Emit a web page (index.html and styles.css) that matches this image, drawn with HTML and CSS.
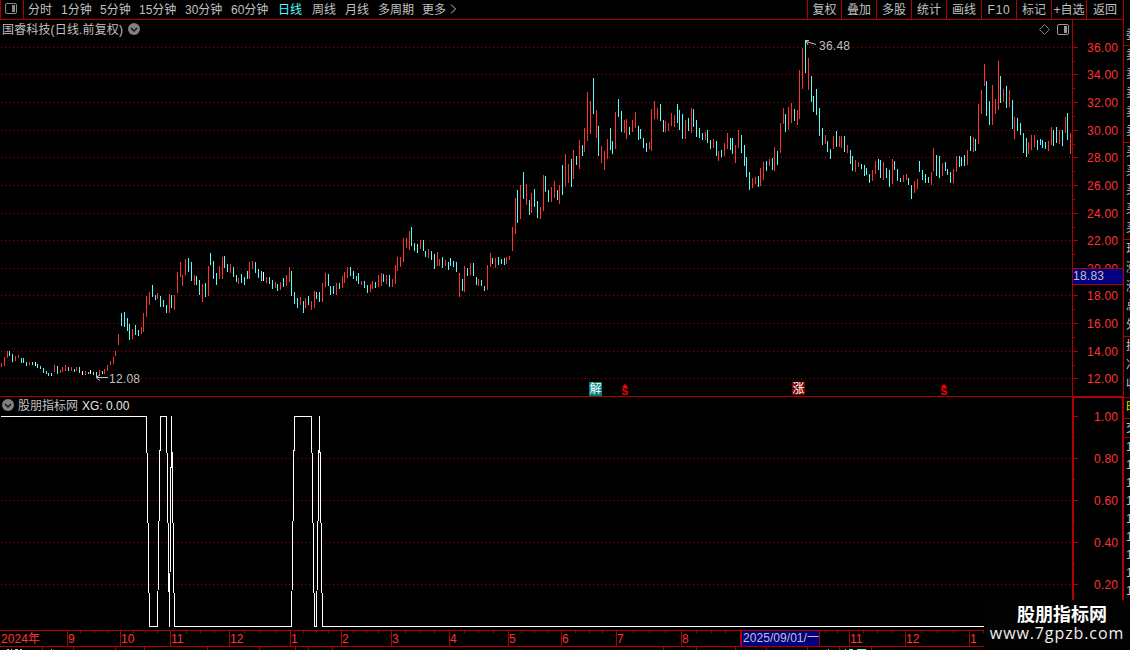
FILE: index.html
```
<!DOCTYPE html>
<html lang="zh-CN">
<head>
    <meta charset="UTF-8">
    <meta name="viewport" content="width=device-width, initial-scale=1.0">
    <title>国睿科技 日线</title>
    <link rel="stylesheet" href="styles.css">
</head>
<body>
    <div class="app">
        <header class="toolbar">
            <div class="panel-toggle">
                <svg width="12" height="11" viewBox="0 0 12 11"><rect x="0.5" y="0.5" width="11" height="10" rx="1.5" fill="none" stroke="#8a8a8a"/><rect x="7" y="2" width="3" height="7" fill="#8a8a8a"/></svg>
            </div>
            <nav class="periods">
                <span>分时</span>
                <span>1分钟</span>
                <span>5分钟</span>
                <span>15分钟</span>
                <span>30分钟</span>
                <span>60分钟</span>
                <span class="active">日线</span>
                <span>周线</span>
                <span>月线</span>
                <span>多周期</span>
                <span>更多</span>
                <svg width="7" height="10" viewBox="0 0 7 10"><path d="M1 0.5L5.5 5L1 9.5" fill="none" stroke="#c0c0c0"/></svg>
            </nav>
            <nav class="tools">
                <span>复权</span>
                <span>叠加</span>
                <span>多股</span>
                <span>统计</span>
                <span>画线</span>
                <span class="f10">F10</span>
                <span>标记</span>
                <span>+自选</span>
                <span>返回</span>
            </nav>
        </header>

        <main class="content">
            <section class="charts">
                <div class="pane price">
                    <svg id="price" width="1124" height="377" viewBox="0 20 1124 377"></svg>
                    <div class="pane-title">
                        <span>国睿科技(日线.前复权)</span>
                        <svg width="12" height="12" viewBox="0 0 12 12"><circle cx="6" cy="6" r="6" fill="#808080"/><path d="M3 5L6 8L9 5" fill="none" stroke="#111" stroke-width="1.4"/></svg>
                    </div>
                    <div class="pane-icons">
                        <svg width="11" height="11" viewBox="0 0 11 11"><path d="M5.5 0.5L10.5 5.5L5.5 10.5L0.5 5.5Z" fill="none" stroke="#808080"/></svg>
                        <svg width="12" height="11" viewBox="0 0 12 11"><rect x="0.5" y="0.5" width="11" height="10" rx="1.5" fill="none" stroke="#9a9a9a"/><rect x="7" y="2" width="3" height="7" fill="#9a9a9a"/></svg>
                    </div>
                </div>
                <div class="pane indicator">
                    <svg id="indicator" width="1124" height="233" viewBox="0 397 1124 233"></svg>
                    <div class="pane-title">
                        <svg width="12" height="12" viewBox="0 0 12 12"><circle cx="6" cy="6" r="6" fill="#808080"/><path d="M3 5L6 8L9 5" fill="none" stroke="#111" stroke-width="1.4"/></svg>
                        <span>股朋指标网</span>
                        <span class="value">XG: 0.00</span>
                    </div>
                </div>
                <svg id="timeline" width="1124" height="20" viewBox="0 630 1124 20"></svg>
            </section>

            <aside class="quotes">
                <div class="row first">委</div>
                <div class="book">
                    <div>卖</div><div>卖</div><div>卖</div><div>卖</div><div>卖</div>
                </div>
                <div class="book">
                    <div>买</div><div>买</div><div>买</div><div>买</div><div>买</div>
                </div>
                <div class="book info">
                    <div>现</div><div>涨</div><div>涨</div><div>总</div><div>外</div>
                </div>
                <div class="book stats">
                    <div>换</div><div>净</div><div>收</div>
                </div>
                <div class="row tab">时</div>
                <div class="row deal">交</div>
                <div class="ticks">
                    <div>1</div><div>1</div><div>1</div><div>1</div><div>1</div><div>1</div><div>1</div><div>1</div><div>1</div>
                </div>
            </aside>
        </main>

        <div class="watermark">
            <strong>股朋指标网</strong>
            <span>www.7gpzb.com</span>
        </div>
    </div>
    <script src="chart.js"></script>
</body>
</html>
```
FILE: styles.css
```
* {
    box-sizing: border-box;
}

body {
    margin: 0;
    background-color: #000;
    color: #c0c0c0;
    font-family: "Liberation Sans", "Noto Sans CJK SC", sans-serif;
    font-size: 12px;
    overflow: hidden;
}

svg {
    display: block;
}

.app {
    position: relative;
    width: 1130px;
    height: 650px;
    overflow: hidden;
}

.toolbar {
    display: flex;
    width: 1124px;
    height: 20px;
    border-bottom: 1px solid #b00000;
    border-right: 1px solid #b00000;
    line-height: 20px;
    white-space: nowrap;
}

.panel-toggle {
    width: 24px;
    padding: 3px 0 0 4px;
    border-left: 1px solid #b00000;
    border-right: 1px solid #b00000;
}

.periods {
    display: grid;
    grid-template-columns: 33px 39px 39px 46px 46px 47px 34px 33px 33px 44px 28px 8px;
    padding-left: 4px;
}

.periods svg {
    margin-top: 4px;
}

.periods .active {
    color: #54fcfc;
}

.tools {
    display: grid;
    grid-template-columns: 34px repeat(7, 35px) 37px;
    margin-left: auto;
}

.tools span {
    border-left: 1px solid #b00000;
    text-align: center;
}

.tools .f10 {
    letter-spacing: 0.7px;
}

.content {
    display: flex;
    height: 630px;
}

.charts {
    width: 1124px;
    flex: none;
}

.pane {
    position: relative;
}

.pane-title {
    position: absolute;
    top: 3px;
    left: 2px;
    display: flex;
    align-items: flex-start;
    gap: 5px;
    line-height: 15px;
}

.price .pane-title span {
    letter-spacing: 0.15px;
}

.indicator .pane-title {
    top: 2px;
    gap: 4px;
}

.pane-title .value {
    color: #e8e8e8;
}

.pane-icons {
    position: absolute;
    top: 4px;
    left: 1039px;
    display: flex;
    gap: 7px;
}

text {
    font-size: 12px;
}

.label {
    fill: #ff3232;
}

.note {
    fill: #c0c0c0;
}

.line {
    fill: #b00000;
}

.quotes {
    width: 6px;
    overflow: hidden;
    line-height: 19px;
    white-space: nowrap;
}

.quotes div {
    padding-left: 2px;
}

.quotes .book,
.quotes .ticks {
    padding-left: 0;
}

.quotes .first {
    height: 26px;
    padding-top: 6px;
    border-bottom: 1px solid #b00000;
}

.book {
    height: 97px;
    border-bottom: 1px solid #b00000;
}

.stats {
    height: 61px;
}

.tab {
    height: 21px;
    color: #e0e000;
    border-bottom: 1px solid #b00000;
}

.deal {
    height: 19px;
    border-bottom: 1px solid #b00000;
}

.ticks {
    line-height: 18px;
}

.watermark {
    position: absolute;
    left: 984px;
    top: 600px;
    width: 146px;
    height: 50px;
    background-color: #020202;
    color: #fff;
    text-align: center;
    white-space: nowrap;
}

.watermark strong {
    display: block;
    margin: 5px 0 0 10px;
    font-size: 18px;
    line-height: 20px;
}

.watermark span {
    display: block;
    font-family: "Open Sans", sans-serif;
    font-size: 16px;
    font-weight: 500;
    line-height: 16px;
    letter-spacing: 0.9px;
    color: #f4eef0;
}
```
FILE: chart.js
```
const RED = '#ff3232';
const COLORS = { r: RED, c: '#54fcfc', w: '#ffffff' };

// x, high, low, colour
const bars = `
1 363 367 r,4 357 366 r,7 351 358 r,9 351 356 c,12 354 362 c,15 356 361 r,18 355 358 r,21 358 363 c,23 358 363 c,26 362 366 c,
29 362 365 r,32 362 365 c,35 362 366 w,37 364 368 c,40 366 369 c,43 368 373 c,46 371 374 c,48 373 376 c,51 373 376 c,54 365 372 r,
57 366 374 c,60 370 373 r,62 367 372 r,65 365 371 r,68 367 371 c,71 367 371 r,74 369 372 c,76 367 371 r,79 367 373 c,82 371 375 w,
85 371 375 r,88 372 374 c,90 370 374 w,93 372 375 c,96 372 377 c,99 370 376 r,102 371 374 c,104 369 374 r,107 365 371 r,110 361 365 r,
113 357 364 r,115 351 356 r,118 334 345 r,121 313 326 c,124 312 327 c,127 318 331 c,129 324 340 c,132 329 339 r,135 325 335 c,138 330 336 c,
141 327 334 r,143 313 332 r,146 296 317 r,149 292 305 r,152 285 297 c,155 295 300 c,157 293 299 r,160 296 307 c,163 300 307 c,166 305 313 c,
169 294 313 r,171 295 308 c,174 295 310 r,177 272 293 r,180 262 277 r,182 275 286 r,185 259 275 r,188 258 272 c,191 262 281 c,194 275 285 r,
196 276 285 c,199 280 295 c,202 284 302 r,205 283 297 c,208 266 296 r,210 253 265 c,213 261 279 c,216 273 285 c,219 266 279 r,222 257 279 r,
224 256 268 c,227 264 272 c,230 264 273 r,233 267 277 c,236 275 282 c,238 278 284 r,241 274 283 c,244 277 285 c,247 271 279 c,249 262 279 r,
252 261 269 r,255 262 273 c,258 269 278 c,261 271 281 c,263 272 281 w,266 277 283 r,269 277 284 c,272 280 289 c,275 282 288 r,277 284 291 c,
280 282 290 r,283 278 287 c,286 275 286 r,289 267 282 r,291 271 296 c,294 292 304 c,297 298 308 c,300 297 305 r,303 301 313 c,305 298 308 r,
308 296 305 c,311 301 310 r,314 291 308 r,316 292 299 c,319 292 302 c,322 283 302 r,325 273 287 r,328 274 286 c,330 286 295 c,333 286 294 c,
336 283 295 r,339 283 289 c,342 276 288 r,344 272 283 r,347 267 278 r,350 267 276 c,353 271 279 c,356 276 281 c,358 273 284 c,361 281 285 r,
364 281 288 c,367 285 293 c,370 284 292 r,372 281 289 r,375 282 288 c,378 275 287 r,381 273 286 r,383 274 282 c,386 275 284 r,389 275 287 c,
392 279 287 r,395 265 284 r,397 257 271 r,400 257 267 r,403 238 262 r,406 238 248 r,409 231 250 r,411 227 246 c,414 243 251 c,417 244 253 c,
420 240 249 r,423 240 251 c,425 251 257 c,428 249 258 r,431 251 260 c,434 254 269 c,437 252 266 r,439 259 266 r,442 257 268 c,445 260 266 r,
448 262 270 c,450 258 266 c,453 261 267 c,456 262 272 c,459 273 297 r,462 279 291 c,464 266 292 r,467 268 276 c,470 263 275 r,473 263 276 c,
476 277 285 c,478 279 286 r,481 280 286 c,484 286 291 c,487 265 290 r,490 253 267 r,492 258 264 c,495 258 268 r,498 257 265 c,501 259 264 c,
504 258 265 c,506 257 264 r,509 256 260 r,512 227 251 r,515 198 234 r,517 190 223 c,520 185 219 r,523 172 199 c,526 184 205 r,529 200 215 c,
531 193 213 r,534 189 207 c,537 201 218 c,540 207 219 r,543 175 211 r,545 176 192 c,548 190 202 c,551 187 202 r,554 181 198 r,557 190 200 c,
559 185 204 r,562 165 195 c,565 154 187 r,568 164 183 r,571 159 187 c,573 150 179 r,576 156 165 c,579 140 169 r,582 145 156 c,584 128 152 r,
587 92 141 r,590 101 134 r,593 78 114 c,596 110 138 r,598 126 156 c,601 146 163 r,604 151 170 r,607 139 159 r,610 128 150 c,612 141 154 c,
615 112 149 r,618 99 117 c,621 111 132 c,624 120 133 r,626 119 139 r,629 127 135 c,632 120 132 r,635 112 128 r,638 126 140 c,640 129 139 c,
643 138 148 c,646 143 152 c,649 142 149 r,651 109 151 r,654 101 119 r,657 108 119 r,660 104 121 c,663 120 132 c,665 121 132 r,668 123 131 r,
671 113 126 r,674 115 127 r,677 104 123 c,679 110 130 c,682 114 139 c,685 120 139 r,688 118 131 c,691 108 133 r,693 109 127 c,696 120 137 c,
699 128 138 c,702 133 140 c,705 132 140 r,707 130 143 c,710 140 149 c,713 139 148 r,716 141 156 c,718 151 161 r,721 150 157 c,724 143 156 r,
727 133 149 r,730 138 150 c,732 138 154 c,735 145 163 r,738 130 148 r,741 135 153 c,744 145 166 c,746 157 177 c,749 172 190 c,752 178 188 r,
755 177 184 r,758 176 187 c,760 168 186 r,763 162 180 r,766 161 171 c,769 159 166 r,772 158 170 c,774 147 171 r,777 151 165 c,780 123 153 r,
783 108 124 r,785 114 132 c,788 107 130 r,791 103 123 r,794 109 121 c,797 110 125 r,799 70 119 r,802 48 89 r,805 40 73 c,808 58 90 r,
811 76 102 c,813 96 112 c,816 89 115 c,819 108 136 c,822 128 145 c,825 135 144 r,827 141 152 c,830 149 159 c,833 136 149 r,836 131 147 c,
839 136 147 r,841 136 148 r,844 136 152 c,847 145 153 r,850 150 164 c,852 156 171 c,855 160 172 r,858 162 167 r,861 164 169 c,864 165 176 c,
866 168 175 c,869 174 183 c,872 170 181 r,875 161 174 r,878 159 170 c,880 160 178 c,883 162 180 r,886 168 178 c,889 170 187 c,892 159 184 r,
894 161 170 c,897 169 181 c,900 178 182 c,903 175 182 r,906 174 180 r,908 178 185 c,911 185 199 c,914 181 193 r,917 179 189 r,919 161 172 c,
922 170 180 c,925 174 183 c,928 177 183 c,931 172 185 r,933 148 171 r,936 155 176 c,939 156 178 c,942 163 176 r,945 162 171 c,947 169 175 c,
950 172 183 c,953 169 183 r,956 156 172 r,959 156 167 c,961 157 166 c,964 155 166 c,967 150 165 r,970 136 151 c,973 137 152 r,975 139 151 c,
978 104 144 r,981 90 114 r,984 64 86 r,986 81 116 c,989 101 125 c,992 85 125 r,995 99 114 r,998 61 110 r,1000 76 103 c,1003 89 102 r,
1006 86 108 c,1009 90 107 r,1012 100 129 c,1014 117 139 r,1017 118 131 c,1020 123 135 c,1023 133 153 c,1026 138 157 c,1028 142 154 r,1031 135 150 r,
1034 135 147 r,1037 140 150 c,1040 139 145 c,1042 140 148 c,1045 142 149 c,1048 141 151 r,1051 127 145 r,1053 130 146 c,1056 127 143 c,1059 130 144 r,
1062 130 146 c,1065 117 133 r,1067 113 140 c,1070 133 154 r`;

function rect(x, y, w, h, fill) {
    return `<rect x="${x}" y="${y}" width="${w}" height="${h}" fill="${fill || '#b00000'}"/>`;
}

function text(x, y, value, cls, len) {
    return `<text x="${x}" y="${y}" class="${cls}"${len ? ` textLength="${len}"` : ''}>${value}</text>`;
}

function gridLine(y) {
    return `<path d="M1 ${y}.5H1072" stroke="#b00000" stroke-dasharray="1 3" shape-rendering="crispEdges"/>`;
}

// price pane
const prices = [[47, '36.00'], [74, '34.00'], [102, '32.00'], [130, '30.00'], [157, '28.00'], [185, '26.00'], [213, '24.00'],
    [240, '22.00'], [268, '20.00'], [295, '18.00'], [323, '16.00'], [351, '14.00'], [378, '12.00']];
let out = '';
prices.forEach(([y, label], i) => {
    out += gridLine(y) + rect(1072, y, 6, 1) + text(1087, y + 5, label, 'label', 31);
    if (i < prices.length - 1) {
        out += rect(1072, Math.round((y + prices[i + 1][0]) / 2), 3, 1);
    }
});
bars.trim().split(',').forEach(row => {
    const [x, high, low, color] = row.trim().split(' ');
    out += rect(x, high, 1, low - high, COLORS[color]);
});
out += rect(1072, 20, 1, 377) + rect(1123, 20, 1, 377) + rect(0, 396, 1124, 1);

// last price box
out += rect(1072, 268, 52, 17) + rect(1073, 269, 50, 15, '#000080') + text(1073, 280, '18.83', 'note', 31);

// high and low marks
out += '<path d="M806 41.5L816 44.5M805 40.5H809M806 41L808 45" fill="none" stroke="#c0c0c0"/>' + text(819, 50, '36.48', 'note', 31);
out += '<path d="M97 377.5H108M96 377.5L100 375M96 377.5L100 380.5" fill="none" stroke="#c0c0c0"/>' + text(109, 383, '12.08', 'note', 31);

// event marks
out += rect(589, 382, 13, 14, '#008080') + '<text x="589.5" y="393" style="font-size:12px" fill="#fff">解</text>';
out += rect(792, 382, 13, 13, '#800000') + '<text x="792.5" y="393" style="font-size:12px" fill="#fff">涨</text>';
[622, 941].forEach(x => {
    out += `<path d="M${x} 387H${x + 6}L${x + 3} 384Z" fill="#f00"/>`;
    out += `<text x="${x - 0.5}" y="395" style="font-size:10px" font-weight="bold" fill="#f00">S</text>`;
});
document.getElementById('price').innerHTML = out;

// indicator pane
out = '';
[[416, '1.00'], [458, '0.80'], [500, '0.60'], [542, '0.40'], [584, '0.20']].forEach(([y, label], i) => {
    if (i > 0) {
        out += gridLine(y);
    }
    out += rect(1072, y, 6, 1) + rect(1072, y + 21, 3, 1) + text(1094, y + 5, label, 'label', 24);
});
out += rect(1072, 397, 2, 233) + rect(1122, 397, 2, 233) + rect(1072, 397, 52, 1);
out += `<polyline points="1,416.5 146.5,416.5 149.5,626.5 157.5,626.5 160.5,416.5 166.5,416.5 169.5,626.5 171.5,416.5
    174.5,626.5 291.5,626.5 294.5,416.5 311.5,416.5 314.5,626.5 316.5,626.5 319.5,416.5 322.5,626.5 1072,626.5"
    fill="none" stroke="#fff" shape-rendering="crispEdges"/>`;
document.getElementById('indicator').innerHTML = out;

// time axis
out = rect(0, 630, 1124, 1) + rect(0, 646, 1124, 1);
out += text(1, 643, '2024年', 'label', 39);
[[67, '9'], [120, '10'], [170, '11'], [229, '12'], [290, '1'], [341, '2'], [391, '3'], [449, '4'], [508, '5'], [561, '6'],
    [616, '7'], [681, '8'], [849, '11'], [905, '12'], [969, '1']].forEach(([x, label]) => {
    out += rect(x, 630, 1, 17) + text(x + 1, 643, label, 'label');
});
[80, 94, 107, 133, 145, 157, 186, 200, 214, 244, 260, 275, 303, 316, 328, 353, 366, 378, 405, 420, 434, 464, 478, 493, 521, 534, 548,
    575, 589, 602, 633, 649, 665, 696, 711, 725, 825, 837, 863, 877, 891, 921, 937, 953, 983].forEach(x => {
    out += rect(x, 630, 1, 3);
});
out += rect(740, 631, 80, 15) + rect(742, 631, 77, 15, '#000080') + text(743, 642, '2025/09/01/一', 'note', 76);

// top edge of the status row
[42, 73, 115, 144, 207, 259, 295, 308, 332, 663, 696, 735, 766, 807, 839, 871].forEach(x => {
    out += rect(x, 647, 1, 3);
});
[[7, 2], [11, 1], [15, 3], [20, 2], [51, 1], [828, 1], [845, 1]].forEach(([x, w]) => {
    out += rect(x, 649, w, 1, '#c0c0c0');
});
out += rect(849, 649, 4, 1, '#54fcfc') + rect(857, 649, 9, 1, '#54fcfc');
document.getElementById('timeline').innerHTML = out;
```
